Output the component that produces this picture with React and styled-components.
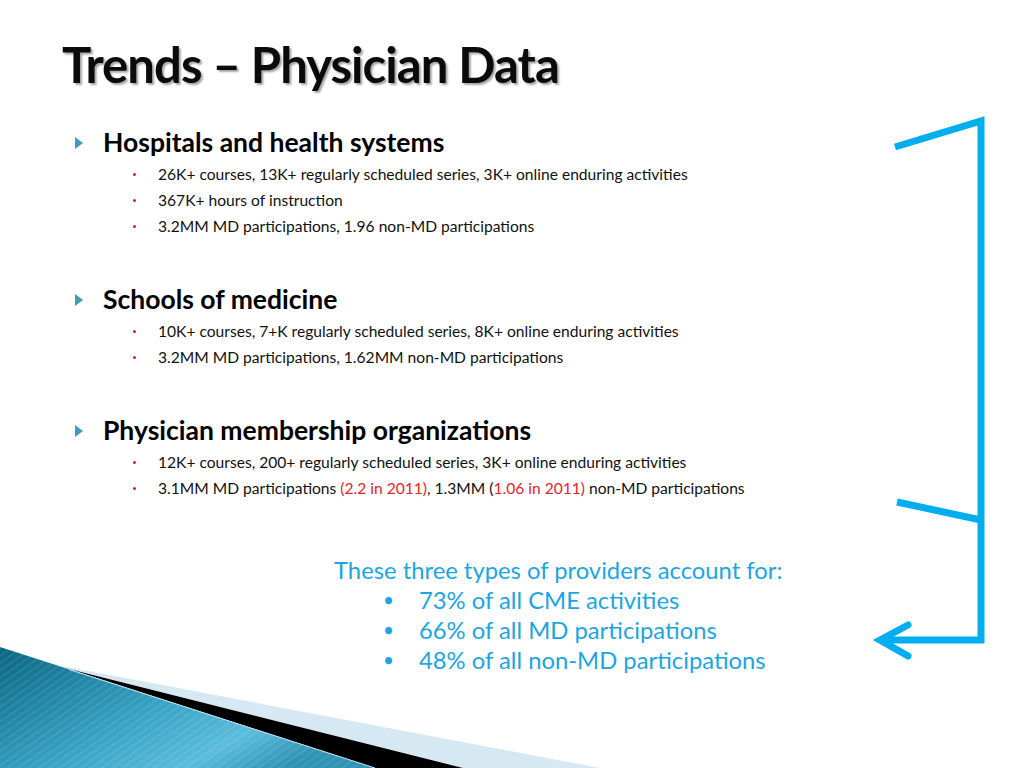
import React from 'react';
import styled, { createGlobalStyle } from 'styled-components';

const GlobalStyle = createGlobalStyle`
	html, body {
		margin: 0;
		padding: 0;
		background: #ffffff;
	}
	body {
		font-family: 'Lato', 'Liberation Sans', sans-serif;
	}
`;

const groups = [
	{
		title: 'Hospitals and health systems',
		items: [
			['26K+ courses, 13K+ regularly scheduled series, 3K+ online enduring activities'],
			['367K+ hours of instruction'],
			['3.2MM MD participations, 1.96 non-MD participations'],
		],
	},
	{
		title: 'Schools of medicine',
		items: [
			['10K+ courses, 7+K regularly scheduled series, 8K+ online enduring activities'],
			['3.2MM MD participations, 1.62MM non-MD participations'],
		],
	},
	{
		title: 'Physician membership organizations',
		items: [
			['12K+ courses, 200+ regularly scheduled series, 3K+ online enduring activities'],
			[
				'3.1MM MD participations ',
				{ red: '(2.2 in 2011)' },
				', 1.3MM (',
				{ red: '1.06 in 2011)' },
				' non-MD participations',
			],
		],
	},
];

const summary = [
	'73% of all CME activities',
	'66% of all MD participations',
	'48% of all non-MD participations',
];

const App = () => {
	return (
		<>
			<GlobalStyle />
			<Slide>
				<Title>Trends – Physician Data</Title>
				<Body>
					{groups.map((group) => (
						<Group key={group.title}>
							<Heading>
								<Arrow />
								{group.title}
							</Heading>
							<SubList>
								{group.items.map((parts, i) => (
									<SubItem key={i}>
										{parts.map((part, j) =>
											typeof part === 'string' ? (
												<React.Fragment key={j}>{part}</React.Fragment>
											) : (
												<Red key={j}>{part.red}</Red>
											)
										)}
									</SubItem>
								))}
							</SubList>
						</Group>
					))}
				</Body>
				<Summary>
					<SummaryLead>These three types of providers account for:</SummaryLead>
					{summary.map((line) => (
						<SummaryItem key={line}>{line}</SummaryItem>
					))}
				</Summary>
				<Bracket viewBox="0 0 140 570" width="140" height="570">
					<g stroke="#00aeef" strokeWidth="7" fill="none" strokeLinejoin="miter">
						<path d="M35 47 L121 21 L121 543" />
						<path d="M37 402 L121 420" />
						<path d="M124 540 H22" />
						<path d="M48 525 L20 540 L48 556" strokeLinecap="round" />
					</g>
				</Bracket>
				<Swoosh viewBox="0 0 620 128" width="620" height="128">
					<defs>
						<linearGradient id="teal" x1="0" y1="0" x2="1" y2="0.6">
							<stop offset="0" stopColor="#0a6580" />
							<stop offset="0.55" stopColor="#3aa6c8" />
							<stop offset="0.8" stopColor="#5cbcdb" />
							<stop offset="1" stopColor="#2f93b4" />
						</linearGradient>
						<pattern
							id="stripes"
							width="6"
							height="6"
							patternUnits="userSpaceOnUse"
							patternTransform="rotate(55)"
						>
							<rect width="2" height="6" fill="#ffffff" opacity="0.08" />
						</pattern>
					</defs>
					<polygon points="62,26 600,128 463,128 69,29" fill="#d6e8f1" />
					<polygon points="69,29 463,128 375,128" fill="#000000" />
					<polygon points="0,7 375,128 0,128" fill="url(#teal)" />
					<polygon points="0,7 375,128 0,128" fill="url(#stripes)" />
					<line x1="69" y1="29.5" x2="375" y2="128" stroke="#bfe3ef" strokeWidth="1" />
				</Swoosh>
			</Slide>
		</>
	);
};

export default App;

const Slide = styled.div`
	position: relative;
	width: 1024px;
	height: 768px;
	overflow: hidden;
	background: #ffffff;
	display: flex;
	flex-direction: column;
`;

const Title = styled.h1`
	margin: 0;
	padding: 36px 0 0 62px;
	height: 92px;
	box-sizing: border-box;
	font-family: 'Lato', 'Liberation Sans', sans-serif;
	font-weight: 700;
	font-size: 49px;
	line-height: 56px;
	letter-spacing: -0.95px;
	color: #0b0b0b;
	text-shadow: 2px 2px 2px rgba(0, 0, 0, 0.35);
`;

const Body = styled.div`
	display: flex;
	flex-direction: column;
	gap: 44px;
	padding: 34px 0 0 75px;
`;

const Group = styled.div`
	display: flex;
	flex-direction: column;
`;

const Heading = styled.div`
	display: flex;
	align-items: center;
	height: 32px;
	font-size: 26.5px;
	font-weight: 700;
	color: #000000;
	margin-bottom: 3px;
`;

const Arrow = styled.span`
	width: 0;
	height: 0;
	border-top: 6px solid transparent;
	border-bottom: 6px solid transparent;
	border-left: 8px solid #3d9db8;
	margin-right: 20px;
	margin-top: 1px;
`;

const SubList = styled.ul`
	list-style: none;
	margin: 0;
	padding: 0 0 0 58px;
`;

const SubItem = styled.li`
	position: relative;
	height: 26px;
	line-height: 26px;
	padding-left: 25px;
	font-size: 15.6px;
	color: #111111;

	&::before {
		content: '';
		position: absolute;
		left: 0;
		top: 12px;
		width: 3px;
		height: 3px;
		border-radius: 50%;
		background: #c8202a;
	}
`;

const Red = styled.span`
	color: #e3232b;
`;

const Summary = styled.div`
	display: flex;
	flex-direction: column;
	padding: 54px 0 0 334px;
	color: #1ea5e0;
	font-size: 23.8px;
`;

const SummaryLead = styled.div`
	line-height: 30px;
`;

const SummaryItem = styled.div`
	position: relative;
	line-height: 30px;
	padding-left: 85px;

	&::before {
		content: '•';
		position: absolute;
		left: 49px;
		font-size: 19px;
	}
`;

const Bracket = styled.svg`
	position: absolute;
	left: 860px;
	top: 100px;
`;

const Swoosh = styled.svg`
	position: absolute;
	left: 0;
	top: 640px;
`;
